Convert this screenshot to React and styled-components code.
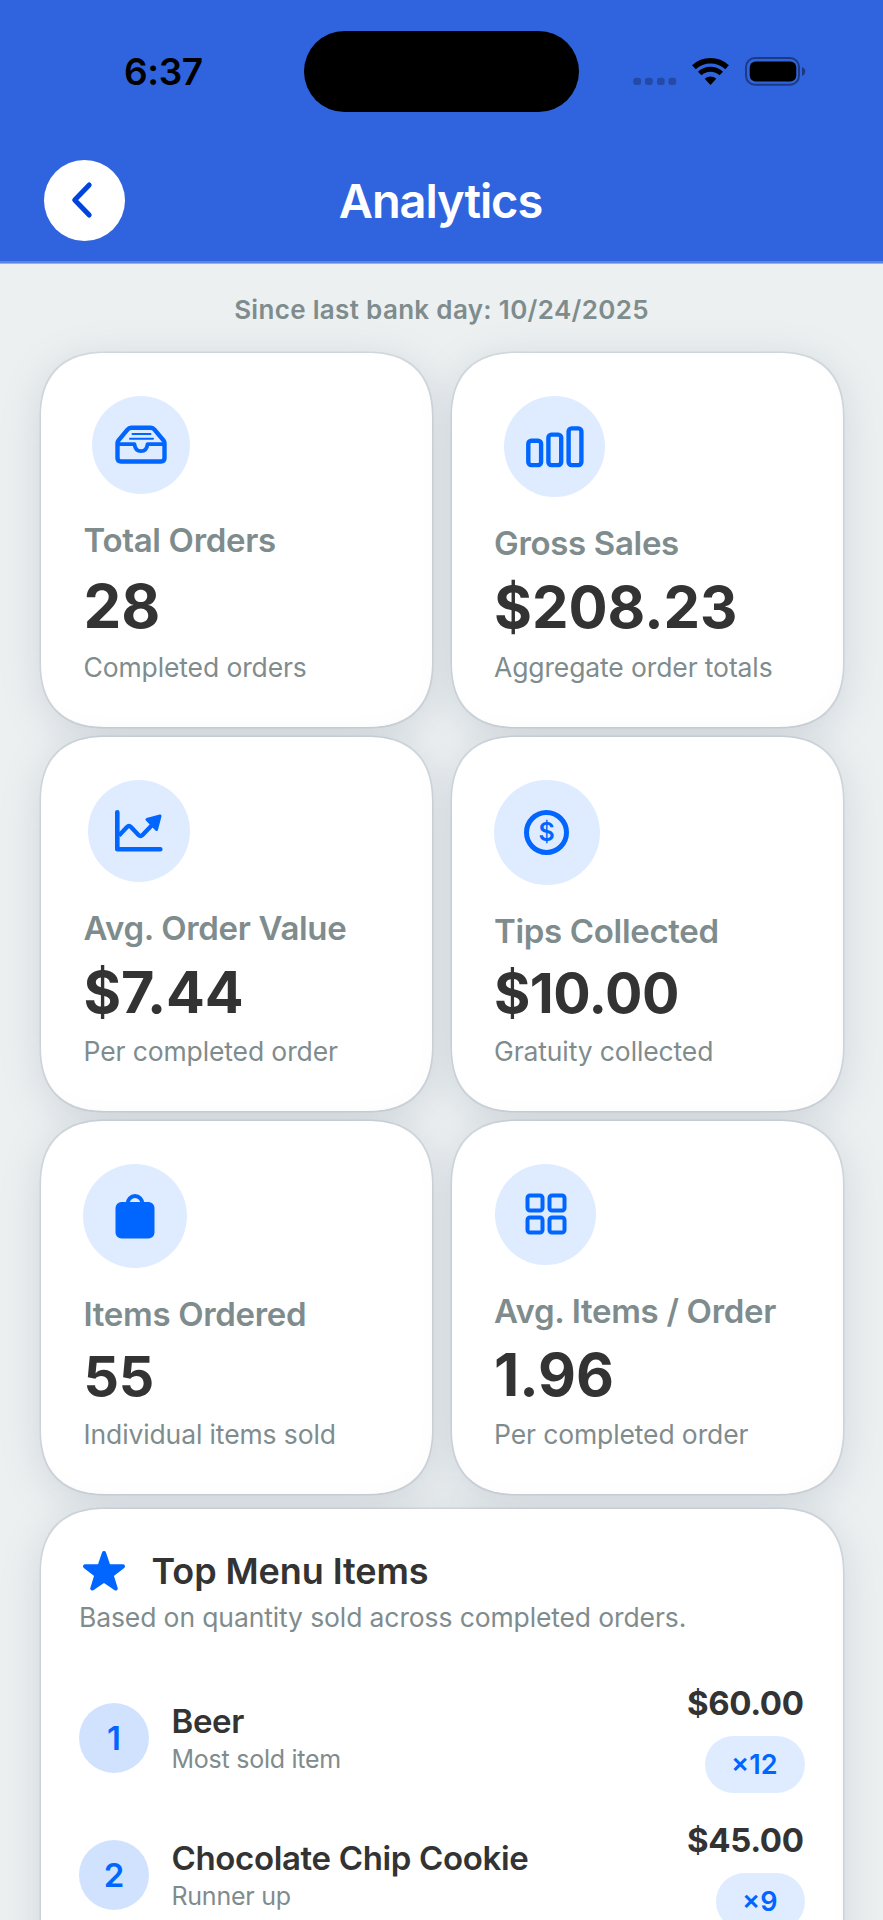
import React from "react";
import styled, { createGlobalStyle } from "styled-components";

const GlobalStyle = createGlobalStyle`
  * {
    box-sizing: border-box;
  }
  body {
    margin: 0;
    background: #ecf0f1;
    font-family: Inter, "Liberation Sans", sans-serif;
    overflow: hidden;
  }
`;

const Screen = styled.div`
  width: 883px;
  height: 1920px;
  overflow: hidden;
  isolation: isolate;
  background: #ecf0f1;
`;

const Header = styled.header`
  height: 263px;
  margin-bottom: 1px;
  background: #3064df;
  border-bottom: 2px solid #5b85e6;
  box-shadow: 0 1px 0 #97aff0;
`;

const StatusBar = styled.div`
  display: grid;
  grid-template-columns: 1fr 275px 1fr;
  height: 142px;
  padding-top: 31px;
`;

const Time = styled.div`
  padding: 18px 0 0 124px;
  font-size: 37px;
  line-height: 46px;
  font-weight: 600;
  letter-spacing: -0.4px;
  color: #000;
`;

const Island = styled.div`
  height: 81px;
  border-radius: 41px;
  background: #000;
`;

const StatusIcons = styled.div`
  display: flex;
  padding: 24px 0 0 53px;
`;

const TitleBar = styled.div`
  display: grid;
  grid-template-columns: 81px 1fr 81px;
  align-items: center;
  padding: 17.5px 44px 0;
`;

const BackButton = styled.button`
  display: flex;
  align-items: center;
  justify-content: center;
  width: 81px;
  height: 81px;
  padding: 0 5px 0 0;
  border: 0;
  border-radius: 50%;
  background: #fff;
`;

const Title = styled.h1`
  margin: 1.5px 2px 0 0;
  text-align: center;
  font-size: 47px;
  line-height: 56px;
  font-weight: 600;
  letter-spacing: -1.1px;
  color: #fff;
`;

const Since = styled.p`
  margin: 30px 0 26px;
  text-align: center;
  font-size: 26px;
  line-height: 34px;
  font-weight: 600;
  letter-spacing: 0.32px;
  color: #7f8c8d;
`;

const Grid = styled.div`
  display: grid;
  grid-template-columns: 391px 391px;
  gap: 10px 19.5px;
  padding-left: 41px;
`;

const Card = styled.section`
  position: relative;
  border-radius: 56px;
  background: #fff;
  box-shadow: 0 0 0 1.5px rgba(127, 140, 155, 0.18), inset -5px -7px 16px rgba(0, 0, 0, 0.013);

  /* keeps the drop shadow below the neighbouring cards */
  &::before {
    content: "";
    position: absolute;
    inset: 0;
    z-index: -1;
    border-radius: inherit;
    box-shadow: 0 8px 40px rgba(100, 120, 140, 0.22);
  }

  @supports (corner-shape: superellipse(1.3)) {
    border-radius: 67px;
    corner-shape: superellipse(1.3);

    &::before {
      corner-shape: superellipse(1.3);
    }
  }
`;

const StatCard = styled(Card)`
  display: flex;
  flex-direction: column;
  height: 373.75px;
  padding: 43px 42px 43px 42.5px;
`;

const IconCircle = styled.div`
  display: flex;
  align-items: center;
  justify-content: center;
  width: ${(p) => p.$size}px;
  height: ${(p) => p.$size}px;
  margin-left: ${(p) => p.$indent}px;
  border-radius: 50%;
  background: #dfecff;
`;

const StatLabel = styled.div`
  margin-top: 25px;
  font-size: 33px;
  line-height: 43px;
  font-weight: 600;
  letter-spacing: -0.32px;
  color: #7f8c8d;
  white-space: nowrap;
`;

const StatValue = styled.div`
  margin: auto 0;
  font-size: ${(p) => p.$size}px;
  line-height: 60px;
  font-weight: 700;
  letter-spacing: ${(p) => p.$spacing || 0}px;
  color: #333;
`;

const Caption = styled.div`
  font-size: 26.5px;
  line-height: 34px;
  letter-spacing: -0.12px;
  color: #7f8c8d;
  white-space: nowrap;
`;

const TopCard = styled(Card)`
  width: 801.5px;
  height: 600px;
  margin: 14.5px 0 0 41px;
  padding: 39.3px 38px 0;
`;

const TopTitle = styled.h2`
  display: flex;
  align-items: center;
  gap: 26px;
  margin: 0 0 6px;
  padding-left: 2.5px;
  font-size: 36px;
  line-height: 46px;
  font-weight: 600;
  letter-spacing: -0.1px;
  color: #333;
`;

const List = styled.div`
  display: flex;
  flex-direction: column;
  gap: 27px;
  margin-top: 48.5px;
`;

const Row = styled.div`
  display: flex;
  align-items: center;
  height: 110px;
`;

const Rank = styled.div`
  width: 70px;
  height: 70px;
  border-radius: 50%;
  background: #d1e2ff;
  text-align: center;
  font-size: 33px;
  line-height: 70px;
  font-weight: 600;
  color: #0066ff;
`;

const ItemInfo = styled.div`
  flex: 1;
  padding-left: 22.5px;
`;

const ItemName = styled.div`
  font-size: 33px;
  line-height: 42px;
  font-weight: 600;
  letter-spacing: -0.35px;
  color: #333;
`;

const ItemNote = styled.div`
  font-size: 25px;
  line-height: 34px;
  letter-spacing: -0.25px;
  color: #7f8c8d;
`;

const ItemTotals = styled.div`
  display: flex;
  flex-direction: column;
  align-items: flex-end;
  gap: 13px;
`;

const Price = styled.div`
  padding-right: 1px;
  font-size: 33px;
  line-height: 40px;
  font-weight: 700;
  letter-spacing: -0.4px;
  color: #333;
`;

const Count = styled.div`
  height: 57px;
  padding: 0 27px 0 26.5px;
  border-radius: 29px;
  background: #dfecff;
  font-size: 27px;
  line-height: 57px;
  font-weight: 600;
  color: #0066ff;
`;

const StatusGlyphs = () => (
  <svg width="176" height="32" viewBox="0 0 176 32">
    <g fill="#000" opacity="0.25">
      <rect x="1.3" y="22.700" width="7.700" height="7.300" rx="2.500" />
      <rect x="13" y="22.700" width="7.700" height="7.300" rx="2.500" />
      <rect x="25" y="22.700" width="7.700" height="7.300" rx="2.500" />
      <rect x="36.500" y="22.700" width="7.700" height="7.300" rx="2.500" />
    </g>
    <g fill="none" stroke="#000">
      <path d="M61.900 12.200a24.400 24.400 0 0 1 33.200 0" strokeWidth="5.400" />
      <path d="M67.700 18.500a15.800 15.800 0 0 1 21.600 0" strokeWidth="5" />
    </g>
    <path d="M78.500 30l-5.800-6.200a8.600 8.600 0 0 1 11.600 0z" fill="#000" />
    <rect x="114" y="3" width="53" height="26.800" rx="9" fill="none" stroke="#000" strokeOpacity="0.42" strokeWidth="2" />
    <rect x="117.700" y="6.400" width="46.600" height="20" rx="6" fill="#000" />
    <path d="M170 12v9c4.400-1.500 4.400-7.500 0-9z" fill="#000" opacity="0.42" />
  </svg>
);

const BackIcon = () => (
  <svg width="22" height="38" viewBox="0 0 22 38">
    <path d="M18.200 4 3.700 19l14.500 15" fill="none" stroke="#0044dd" strokeWidth="5" strokeLinecap="round" strokeLinejoin="round" />
  </svg>
);

const TrayIcon = () => (
  <svg width="52" height="40" viewBox="0 0 52 40" fill="none" stroke="#0066ff" strokeLinecap="round" strokeLinejoin="round">
    <path d="M2.500 18v15q0 3.500 3.500 3.500h40q3.500 0 3.500-3.500V18q0-1.500-1-2.700L39.500 4.600Q38 2.800 35.800 2.800H16.200q-2.200 0-3.700 1.800L3.500 15.300q-1 1.200-1 2.700z" strokeWidth="4.400" />
    <path d="M3 19.200h16.500q.6 7 6.500 7t6.500-7H49" strokeWidth="3.800" />
    <path d="M17.500 9h18M15 13.700h23" strokeWidth="2" />
  </svg>
);

const BarsIcon = () => (
  <svg width="58" height="42" viewBox="0 0 58 42" fill="none" stroke="#0066ff" strokeWidth="4.400">
    <rect x="2.300" y="14.800" width="12.800" height="24.300" rx="3" />
    <rect x="22.400" y="8.600" width="12.800" height="30.500" rx="3" />
    <rect x="42.600" y="2.400" width="12.800" height="36.700" rx="3" />
  </svg>
);

const TrendIcon = () => (
  <svg width="48" height="42" viewBox="0 0 48 42">
    <path d="M2.300 2.300v37h43" fill="none" stroke="#0066ff" strokeWidth="4.600" strokeLinecap="round" strokeLinejoin="round" />
    <path d="M4 25.500 12 17q2-2 4 0l7.500 8q2 2 4 0L39 13" fill="none" stroke="#0066ff" strokeWidth="4.300" />
    <path d="M32 9.500 45 6l-3.500 13.500z" fill="#0066ff" stroke="#0066ff" strokeWidth="3" strokeLinejoin="round" />
  </svg>
);

const CoinRing = styled.div`
  width: 45px;
  height: 45px;
  border: 5px solid #0066ff;
  border-radius: 50%;
  text-align: center;
  font-size: 25px;
  line-height: 35px;
  font-weight: 600;
  color: #0066ff;
`;

const BagIcon = () => (
  <svg width="40" height="46" viewBox="0 0 40 46">
    <rect x="0.500" y="9" width="39" height="36.500" rx="6" fill="#0066ff" />
    <path d="M12.500 11a7.500 8 0 0 1 15 0" fill="none" stroke="#0066ff" strokeWidth="3.800" />
  </svg>
);

const GridIcon = () => (
  <svg width="42" height="42" viewBox="0 0 42 42" fill="none" stroke="#0066ff" strokeWidth="4">
    <rect x="2.500" y="2.500" width="15" height="15" rx="2.500" />
    <rect x="24.500" y="2.500" width="15" height="15" rx="2.500" />
    <rect x="2.500" y="24.500" width="15" height="15" rx="2.500" />
    <rect x="24.500" y="24.500" width="15" height="15" rx="2.500" />
  </svg>
);

const StarIcon = () => (
  <svg width="44" height="42" viewBox="0 0 44 42">
    <path
      d="M22 3l4.600 13.300H41L29.600 25.200 33.800 38.500 22 30.600 10.200 38.500l4.200-13.300L3 16.300h14.400z"
      fill="#0066ff"
      stroke="#0066ff"
      strokeWidth="4"
      strokeLinejoin="round"
    />
  </svg>
);

const stats = [
  { label: "Total Orders", value: "28", note: "Completed orders", icon: <TrayIcon />, circle: 98, indent: 8, size: 60 },
  { label: "Gross Sales", value: "$208.23", note: "Aggregate order totals", icon: <BarsIcon />, circle: 101, indent: 10, size: 58 },
  { label: "Avg. Order Value", value: "$7.44", note: "Per completed order", icon: <TrendIcon />, circle: 102, indent: 4, size: 57.5, spacing: -0.2 },
  { label: "Tips Collected", value: "$10.00", note: "Gratuity collected", icon: <CoinRing>$</CoinRing>, circle: 105.5, indent: 0, size: 55.5, spacing: -0.5 },
  { label: "Items Ordered", value: "55", note: "Individual items sold", icon: <BagIcon />, circle: 104, indent: -0.5, size: 55.5, spacing: -0.3 },
  { label: "Avg. Items / Order", value: "1.96", note: "Per completed order", icon: <GridIcon />, circle: 101, indent: 1, size: 58.5 },
];

const items = [
  { name: "Beer", note: "Most sold item", price: "$60.00", count: 12 },
  { name: "Chocolate Chip Cookie", note: "Runner up", price: "$45.00", count: 9 },
];

const App = () => {
  return (
    <Screen>
      <GlobalStyle />
      <Header>
        <StatusBar>
          <Time>6:37</Time>
          <Island />
          <StatusIcons>
            <StatusGlyphs />
          </StatusIcons>
        </StatusBar>
        <TitleBar>
          <BackButton aria-label="Back">
            <BackIcon />
          </BackButton>
          <Title>Analytics</Title>
        </TitleBar>
      </Header>
      <Since>Since last bank day: 10/24/2025</Since>
      <Grid>
        {stats.map((stat) => (
          <StatCard key={stat.label}>
            <IconCircle $size={stat.circle} $indent={stat.indent}>
              {stat.icon}
            </IconCircle>
            <StatLabel>{stat.label}</StatLabel>
            <StatValue $size={stat.size} $spacing={stat.spacing}>
              {stat.value}
            </StatValue>
            <Caption>{stat.note}</Caption>
          </StatCard>
        ))}
      </Grid>
      <TopCard>
        <TopTitle>
          <StarIcon />
          Top Menu Items
        </TopTitle>
        <Caption>Based on quantity sold across completed orders.</Caption>
        <List>
          {items.map((item, i) => (
            <Row key={item.name}>
              <Rank>{i + 1}</Rank>
              <ItemInfo>
                <ItemName>{item.name}</ItemName>
                <ItemNote>{item.note}</ItemNote>
              </ItemInfo>
              <ItemTotals>
                <Price>{item.price}</Price>
                <Count>×{item.count}</Count>
              </ItemTotals>
            </Row>
          ))}
        </List>
      </TopCard>
    </Screen>
  );
};

export default App;
